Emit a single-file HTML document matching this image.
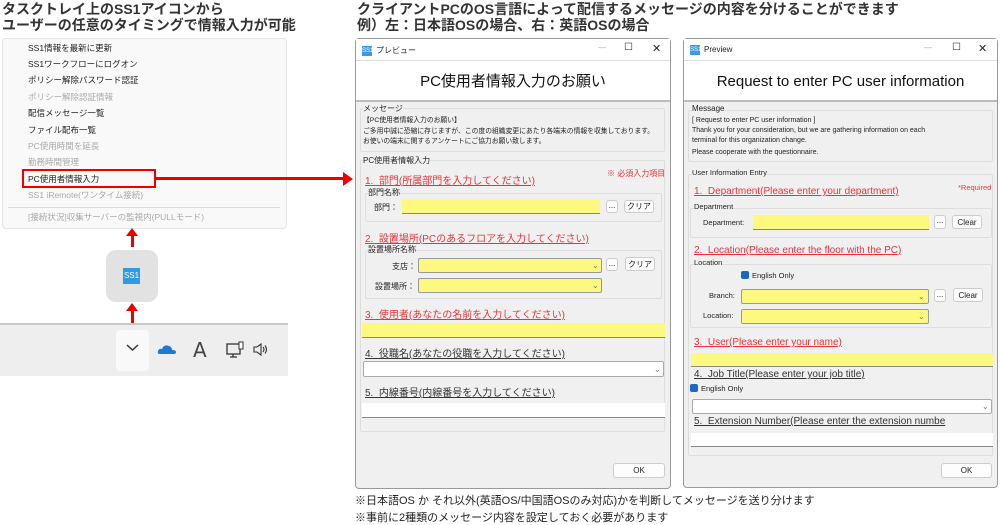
<!DOCTYPE html>
<html><head><meta charset="utf-8">
<style>
*{margin:0;padding:0;box-sizing:border-box}
body{width:1000px;height:523px;background:#fff;position:relative;overflow:hidden;font-family:"Liberation Sans","Noto Sans CJK JP",sans-serif;color:#222}
.a{position:absolute;white-space:nowrap}
.h{font-weight:bold;font-size:14px;line-height:16px;color:#333}
.mi{font-size:8.5px;color:#222}
.g{color:#aaa}
.win{position:absolute;border:1px solid #9a9a9a;background:#f0f0f0;border-radius:4px}
.tb{position:absolute;left:0;right:0;top:0;height:22px;background:#fff;border-bottom:1px solid #ddd;font-size:8px}
.hd{position:absolute;left:0;right:0;top:22px;height:41px;background:#fff;border-bottom:2px solid #bbb;text-align:center;font-size:15px;line-height:41px;color:#111}
.grp{position:absolute;border:1px solid #ddd;border-radius:2px}
.s{font-size:8px}
.red{color:#e8343a;text-decoration:underline;font-size:10px}
.blk{color:#333;text-decoration:underline;font-size:10px}
.y{position:absolute;background:#fdf87f;border-bottom:1px solid #888}
.w{position:absolute;background:#fff;border:1px solid #aaa;border-radius:2px}
.btn{position:absolute;background:#fbfbfb;border:1px solid #ccc;border-radius:3px;font-size:8px;text-align:center}
.cb{display:inline-block;width:8px;height:8px;background:#1c66c4;border-radius:2px;vertical-align:-1px;margin-right:3px}
.chev{position:absolute;font-size:8px;color:#777}
.ic{display:inline-block;width:10px;height:10px;background:#3a9be8;color:#fff;font-size:6px;line-height:10px;text-align:center;vertical-align:middle;margin-right:4px}
</style></head><body>

<div class="a h" style="left:2px;top:1px">タスクトレイ上のSS1アイコンから</div>
<div class="a h" style="left:2px;top:17px">ユーザーの任意のタイミングで情報入力が可能</div>

<div class="a" style="left:2px;top:38px;width:285px;height:191px;background:#f9f9f9;border:1px solid #e4e4e4;border-radius:4px"></div>
<div class="a mi" style="left:28px;top:42px">SS1情報を最新に更新</div>
<div class="a mi" style="left:28px;top:58px">SS1ワークフローにログオン</div>
<div class="a mi" style="left:28px;top:74px">ポリシー解除パスワード認証</div>
<div class="a mi g" style="left:28px;top:91px">ポリシー解除認証情報</div>
<div class="a mi" style="left:28px;top:107px">配信メッセージ一覧</div>
<div class="a mi" style="left:28px;top:124px">ファイル配布一覧</div>
<div class="a mi g" style="left:28px;top:140px">PC使用時間を延長</div>
<div class="a mi g" style="left:28px;top:156px">勤務時間管理</div>
<div class="a mi" style="left:28px;top:173px">PC使用者情報入力</div>
<div class="a mi g" style="left:28px;top:189px">SS1 iRemote(ワンタイム接続)</div>
<div class="a" style="left:8px;top:207px;width:272px;height:1px;background:#ddd"></div>
<div class="a mi g" style="left:28px;top:211px">[接続状況]収集サーバーの監視内(PULLモード)</div>
<div class="a" style="left:22px;top:169px;width:134px;height:19px;border:2px solid #e00"></div>
<div class="a" style="left:155px;top:177px;width:190px;height:3px;background:#e00"></div>
<div class="a" style="left:343px;top:172px;width:0;height:0;border-top:7px solid transparent;border-bottom:7px solid transparent;border-left:10px solid #e00"></div>

<div class="a" style="left:131px;top:235px;width:3px;height:12px;background:#e00"></div>
<div class="a" style="left:126px;top:228px;border-left:6px solid transparent;border-right:6px solid transparent;border-bottom:8px solid #e00"></div>
<div class="a" style="left:106px;top:250px;width:52px;height:52px;background:#e2e2e2;border-radius:10px"></div>
<div class="a" style="left:123px;top:268px;width:17px;height:16px;background:#2f9be6;color:#fff;font-size:8px;line-height:16px;text-align:center">SS1</div>
<div class="a" style="left:131px;top:310px;width:3px;height:14px;background:#e00"></div>
<div class="a" style="left:126px;top:303px;border-left:6px solid transparent;border-right:6px solid transparent;border-bottom:8px solid #e00"></div>

<div class="a" style="left:0;top:323px;width:288px;height:53px;background:#eeeeee;border-top:2px solid #c8c8c8"></div>
<div class="a" style="left:116px;top:330px;width:33px;height:41px;background:#f9f9f9;border-radius:4px"></div>
<svg class="a" style="left:126px;top:344px" width="13" height="8"><path d="M1 1 L6.5 6 L12 1" stroke="#333" stroke-width="1.5" fill="none"/></svg>
<svg class="a" style="left:157px;top:343px" width="20" height="12"><path d="M3 11 Q0 11 1 8 Q2 5 5 6 Q7 1 12 3 Q15 4 15 7 Q19 7 19 9 Q19 11 17 11 Z" fill="#1f78d1"/></svg>
<div class="a" style="left:193px;top:338px;font-size:20px;color:#444;font-family:'DejaVu Sans',sans-serif">A</div>
<svg class="a" style="left:226px;top:341px" width="20" height="18"><rect x="1" y="3" width="13" height="10" fill="none" stroke="#333" stroke-width="1.3"/><path d="M7 13 V16 M4 16 H11" stroke="#333" stroke-width="1.3"/><rect x="13" y="1" width="4" height="7" fill="#fff" stroke="#333"/></svg>
<svg class="a" style="left:252px;top:342px" width="18" height="15"><path d="M2 5 H5 L9 2 V13 L5 10 H2 Z" fill="none" stroke="#333" stroke-width="1.1"/><path d="M11 5 Q13 7.5 11 10 M13 3.5 Q16 7.5 13 11.5" fill="none" stroke="#333" stroke-width="1.1"/></svg>

<div class="a h" style="left:357px;top:1px">クライアントPCのOS言語によって配信するメッセージの内容を分けることができます</div>
<div class="a h" style="left:357px;top:17px">例）左：日本語OSの場合、右：英語OSの場合</div>

<!-- JP window -->
<div class="win" style="left:355px;top:38px;width:316px;height:451px">
 <div class="tb"><span class="a" style="left:6px;top:6px"><span class="ic">SS1</span>プレビュー</span><span class="a" style="left:242px;top:4px;color:#aaa">—</span><span class="a" style="left:268px;top:3px;font-size:10px">☐</span><span class="a" style="left:296px;top:3px;font-size:11px">✕</span></div>
 <div class="hd">PC使用者情報入力のお願い</div>
</div>
<div class="grp" style="left:360px;top:108px;width:305px;height:44px"></div>
<div class="a s" style="left:363px;top:103px;background:#f0f0f0">メッセージ</div>
<div class="a" style="left:363px;top:116px;font-size:6.8px;line-height:10.5px">【PC使用者情報入力のお願い】<br>ご多用中誠に恐縮に存じますが、この度の組織変更にあたり各端末の情報を収集しております。<br>お使いの端末に関するアンケートにご協力お願い致します。</div>
<div class="grp" style="left:360px;top:160px;width:305px;height:272px"></div>
<div class="a s" style="left:363px;top:155px;background:#f0f0f0">PC使用者情報入力</div>
<div class="a red" style="left:365px;top:172px">1.&nbsp; 部門(所属部門を入力してください)</div>
<div class="a" style="left:607px;top:168px;font-size:8px;color:#e8343a">※ 必須入力項目</div>
<div class="grp" style="left:365px;top:193px;width:297px;height:29px"></div>
<div class="a s" style="left:368px;top:187px;background:#f0f0f0">部門名称</div>
<div class="a" style="left:374px;top:202px;font-size:8px">部門：</div>
<div class="y" style="left:402px;top:200px;width:198px;height:14px"></div>
<div class="btn" style="left:606px;top:200px;width:12px;height:13px;line-height:10px">...</div>
<div class="btn" style="left:624px;top:200px;width:30px;height:13px;line-height:12px">クリア</div>
<div class="a red" style="left:365px;top:230px">2.&nbsp; 設置場所(PCのあるフロアを入力してください)</div>
<div class="grp" style="left:365px;top:250px;width:297px;height:49px"></div>
<div class="a s" style="left:368px;top:244px;background:#f0f0f0">設置場所名称</div>
<div class="a" style="left:392px;top:261px;font-size:8px">支店：</div>
<div class="y" style="left:418px;top:258px;width:184px;height:15px;border:1px solid #999;border-radius:2px"></div><div class="chev" style="left:592px;top:261px">⌄</div>
<div class="btn" style="left:606px;top:258px;width:12px;height:13px;line-height:10px">...</div>
<div class="btn" style="left:625px;top:257px;width:30px;height:14px;line-height:13px">クリア</div>
<div class="a" style="left:375px;top:281px;font-size:8px">設置場所：</div>
<div class="y" style="left:418px;top:278px;width:184px;height:15px;border:1px solid #999;border-radius:2px"></div><div class="chev" style="left:592px;top:281px">⌄</div>
<div class="a red" style="left:365px;top:306px">3.&nbsp; 使用者(あなたの名前を入力してください)</div>
<div class="y" style="left:362px;top:323px;width:303px;height:15px"></div>
<div class="a blk" style="left:365px;top:345px">4.&nbsp; 役職名(あなたの役職を入力してください)</div>
<div class="w" style="left:363px;top:361px;width:301px;height:16px"></div><div class="chev" style="left:654px;top:365px">⌄</div>
<div class="a blk" style="left:365px;top:384px">5.&nbsp; 内線番号(内線番号を入力してください)</div>
<div class="a" style="left:362px;top:403px;width:303px;height:15px;background:#fff;border-bottom:1px solid #888"></div>
<div class="btn" style="left:613px;top:463px;width:52px;height:15px;line-height:14px;background:#fdfdfd">OK</div>

<!-- EN window -->
<div class="win" style="left:683px;top:38px;width:315px;height:450px">
 <div class="tb"><span class="a" style="left:6px;top:6px"><span class="ic">SS1</span>Preview</span><span class="a" style="left:240px;top:4px;color:#aaa">—</span><span class="a" style="left:268px;top:3px;font-size:10px">☐</span><span class="a" style="left:294px;top:3px;font-size:11px">✕</span></div>
 <div class="hd">Request to enter PC user information</div>
</div>
<div class="grp" style="left:688px;top:110px;width:305px;height:52px"></div>
<div class="a s" style="left:692px;top:104px;background:#f0f0f0;font-size:8px">Message</div>
<div class="a" style="left:692px;top:116px;font-size:7px;line-height:10px">[ Request to enter PC user information ]<br>Thank you for your consideration, but we are gathering information on each<br>terminal for this organization change.<br><span style="line-height:14px">Please cooperate with the questionnaire.</span></div>
<div class="grp" style="left:688px;top:174px;width:305px;height:282px"></div>
<div class="a" style="left:692px;top:168px;background:#f0f0f0;font-size:7.5px">User Information Entry</div>
<div class="a red" style="left:694px;top:186px">1.&nbsp; Department(Please enter your department)</div>
<div class="a" style="left:958px;top:183px;font-size:7.5px;color:#e8343a">*Required</div>
<div class="grp" style="left:690px;top:208px;width:302px;height:30px"></div>
<div class="a" style="left:694px;top:202px;background:#f0f0f0;font-size:7.5px">Department</div>
<div class="a" style="left:703px;top:218px;font-size:7.5px">Department:</div>
<div class="y" style="left:753px;top:215px;width:176px;height:15px"></div>
<div class="btn" style="left:934px;top:215px;width:12px;height:14px;line-height:10px">...</div>
<div class="btn" style="left:952px;top:215px;width:30px;height:14px;line-height:13px">Clear</div>
<div class="a red" style="left:694px;top:245px">2.&nbsp; Location(Please enter the floor with the PC)</div>
<div class="grp" style="left:690px;top:264px;width:302px;height:64px"></div>
<div class="a" style="left:694px;top:258px;background:#f0f0f0;font-size:7.5px">Location</div>
<div class="a" style="left:741px;top:271px;font-size:7.5px"><span class="cb"></span>English Only</div>
<div class="a" style="left:709px;top:291px;font-size:7.5px">Branch:</div>
<div class="y" style="left:741px;top:289px;width:188px;height:15px;border:1px solid #999;border-radius:2px"></div><div class="chev" style="left:918px;top:292px">⌄</div>
<div class="btn" style="left:934px;top:289px;width:12px;height:13px;line-height:10px">...</div>
<div class="btn" style="left:953px;top:288px;width:30px;height:14px;line-height:13px">Clear</div>
<div class="a" style="left:703px;top:311px;font-size:7.5px">Location:</div>
<div class="y" style="left:741px;top:309px;width:188px;height:15px;border:1px solid #999;border-radius:2px"></div><div class="chev" style="left:918px;top:312px">⌄</div>
<div class="a red" style="left:694px;top:337px">3.&nbsp; User(Please enter your name)</div>
<div class="y" style="left:691px;top:353px;width:302px;height:14px"></div>
<div class="a blk" style="left:694px;top:369px">4.&nbsp; Job Title(Please enter your job title)</div>
<div class="a" style="left:690px;top:384px;font-size:7.5px"><span class="cb"></span>English Only</div>
<div class="w" style="left:692px;top:399px;width:300px;height:15px"></div><div class="chev" style="left:982px;top:402px">⌄</div>
<div class="a blk" style="left:694px;top:416px">5.&nbsp; Extension Number(Please enter the extension numbe</div>
<div class="a" style="left:691px;top:433px;width:302px;height:14px;background:#fff;border-bottom:1px solid #888"></div>
<div class="btn" style="left:941px;top:463px;width:51px;height:15px;line-height:14px;background:#fdfdfd">OK</div>

<div class="a" style="left:355px;top:492px;font-size:11px;color:#222">※日本語OS か それ以外(英語OS/中国語OSのみ対応)かを判断してメッセージを送り分けます</div>
<div class="a" style="left:355px;top:509px;font-size:11px;color:#222">※事前に2種類のメッセージ内容を設定しておく必要があります</div>
</body></html>
